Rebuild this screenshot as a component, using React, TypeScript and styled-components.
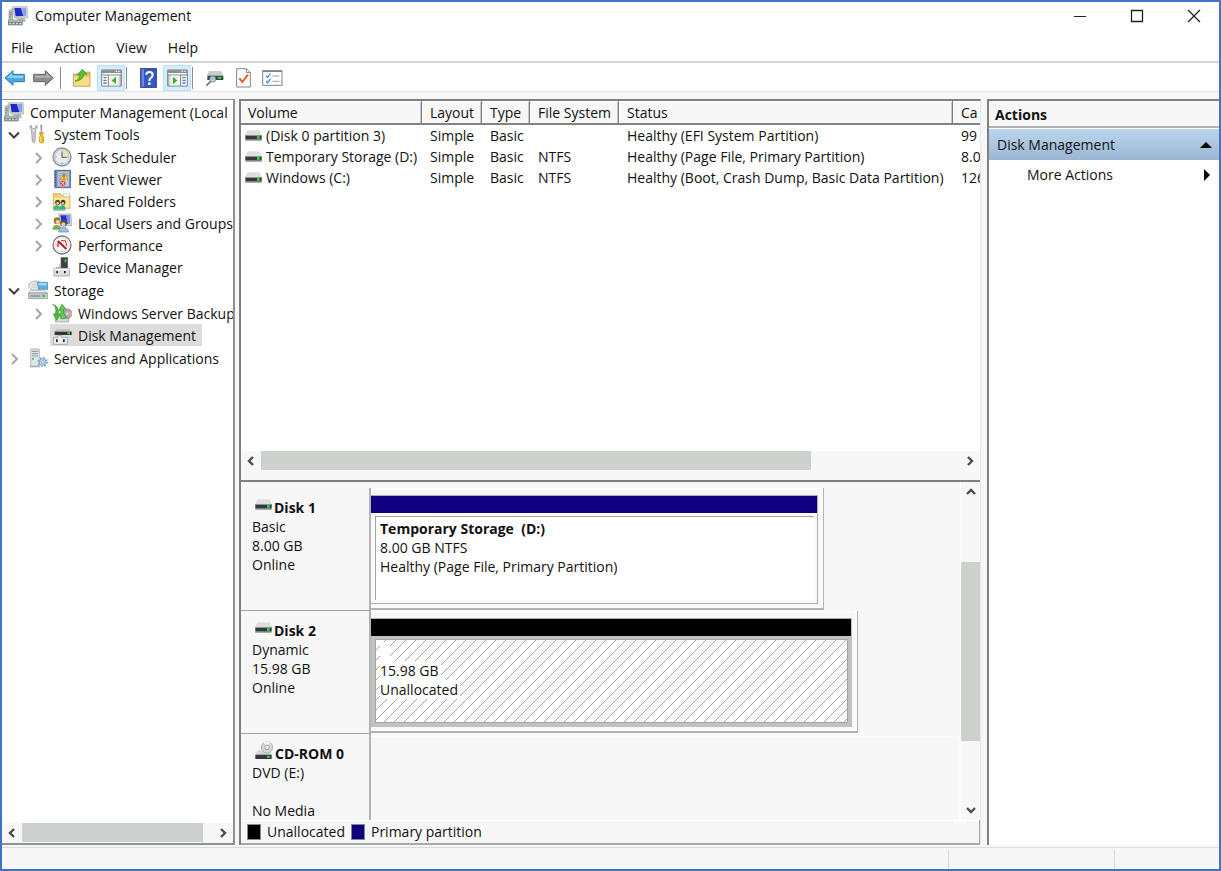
import React from "react";
import styled, { createGlobalStyle, css } from "styled-components";

const GlobalStyle = createGlobalStyle`
  * { box-sizing: border-box; }
  body { margin: 0; background: #fff; }
  body, button { font-family: "Open Sans", "Noto Sans", sans-serif; font-size: 14px; line-height: 19px; color: #111; }
  button { margin: 0; padding: 0; border: 0; background: none; text-align: left; white-space: nowrap; }
  ul { list-style: none; margin: 0; padding: 0; }
  h1, h2, h3, p { margin: 0; font-size: 14px; }
  svg { display: block; flex: none; }
`;

/* ---------- window frame ---------- */

const Window = styled.div`
  display: flex;
  flex-direction: column;
  height: 100vh;
  border: 2px solid #4472c4;
  background: #fff;
  overflow: hidden;
`;

const TitleBar = styled.header`
  display: flex;
  align-items: center;
  height: 27px;
  padding-left: 6px;
  gap: 7px;
`;

const Title = styled.h1`
  flex: 1;
  font-weight: 400;
`;

const CaptionButtons = styled.div`
  display: flex;
`;

const CaptionButton = styled.button`
  display: flex;
  align-items: center;
  justify-content: center;
  width: 57px;
  height: 26px;
  &:last-child { width: 54px; padding-left: 4px; }
`;

const MenuBar = styled.nav`
  display: flex;
  align-items: center;
  gap: 21px;
  height: 34px;
  padding: 4px 9px 0;
  border-bottom: 2px solid #d0d4d4;
`;

const Toolbar = styled.div`
  display: flex;
  align-items: center;
  gap: 1px;
  height: 29px;
  padding-top: 1px;
  border-bottom: 1px solid #e4e4e4;
`;

const ToolButton = styled.button<{ $on?: boolean }>`
  display: flex;
  align-items: center;
  justify-content: center;
  width: 28px;
  height: 26px;
  ${(p) => p.$on && css`background: #d5edff; border: 1px solid #b9e0fb;`}
`;

const ToolSeparator = styled.span`
  width: 7px;
  height: 22px;
  border-left: 1px solid #8c8c8c;
`;

const Body = styled.main`
  display: flex;
  flex: 1;
  min-height: 0;
  padding: 7px 0 2px;
  background: #f7f7f7;
`;

const StatusBar = styled.footer`
  display: flex;
  justify-content: flex-end;
  height: 22px;
  border-top: 1px solid #dcdcdc;
  background: #f7f7f7;
`;

const StatusCell = styled.span<{ $w: number }>`
  width: ${(p) => p.$w}px;
  margin-top: 2px;
  border-left: 1px solid #dadada;
`;

/* ---------- scroll bars ---------- */

const HScroll = styled.div`
  display: flex;
  align-items: center;
  height: 20px;
  background: #f7f7f7;
`;

const VScroll = styled.div`
  display: flex;
  flex-direction: column;
  align-items: center;
  width: 20px;
  background: #f7f7f7;
  border-left: 1px solid #fff;
`;

const ScrollTrack = styled.div<{ $v?: boolean }>`
  display: flex;
  flex-direction: ${(p) => (p.$v ? "column" : "row")};
  align-self: stretch;
  flex: 1;
  ${(p) => !p.$v && css`padding-bottom: 1px;`}
`;

const Space = styled.span<{ $grow: number }>`
  flex: ${(p) => p.$grow} 0 0;
`;

const Thumb = styled.span<{ $grow: number }>`
  flex: ${(p) => p.$grow} 0 0;
  background: #ccd1cd;
`;

const ScrollButton = styled.button`
  display: flex;
  align-items: center;
  justify-content: center;
  width: 20px;
  height: 20px;
`;

/* ---------- console tree ---------- */

const TreePane = styled.section`
  display: flex;
  flex-direction: column;
  width: 233px;
  margin-right: 4px;
  background: #fff;
  border: solid #8e929b;
  border-width: 1px 2px 2px 0;
`;

const TreeRoot = styled.div`
  flex: 1;
  min-height: 0;
  overflow: hidden;
  padding-top: 1px;
`;

const Branch = styled.ul`
  & & { padding: 1px 0; }
`;

const TreeRow = styled.div<{ $depth: number }>`
  display: flex;
  align-items: center;
  height: 22px;
  padding-left: ${(p) => Math.max(0, p.$depth - 1) * 24}px;
`;

const Toggle = styled.button`
  display: flex;
  align-items: center;
  justify-content: center;
  flex: none;
  width: 24px;
  height: 22px;
  padding: 2px 1px 0 0;
`;

const TreeLabel = styled.button<{ $selected?: boolean }>`
  display: flex;
  align-items: center;
  gap: 6px;
  height: 22px;
  padding: 0 6px 0 2px;
  background: ${(p) => (p.$selected ? "#dcdcdc" : "none")};
`;

/* ---------- centre pane ---------- */

const CenterPane = styled.section`
  display: flex;
  flex-direction: column;
  flex: 1;
  min-width: 0;
  margin-right: 6px;
  border: solid #808080;
  border-width: 2px 0 0 2px;
  border-right: 1px solid #e6e6e6;
`;

const VolumePane = styled.div`
  display: flex;
  flex-direction: column;
  height: 381px;
  padding-bottom: 9px;
  border-bottom: 2px solid #808080;
  background: #f7f7f7;
`;

const VolumeView = styled.div`
  flex: 1;
  overflow: hidden;
  background: #fff;
`;

const VolumeTable = styled.table`
  table-layout: fixed;
  width: 100%;
  border-collapse: separate;
  border-spacing: 0;
`;

const HeadCell = styled.th`
  height: 24px;
  padding: 0 0 0 8px;
  font-weight: 400;
  text-align: left;
  white-space: nowrap;
  overflow: hidden;
  background: #f7f7f7;
  border-right: 1px solid #7c7c7c;
  border-bottom: 2px solid #828282;
  box-shadow: inset 1px 1px 0 #fff, inset -1px 0 0 #c8c8c8;
  &:first-child { padding-left: 7px; }
  &:last-child { border-right: 0; box-shadow: inset 1px 1px 0 #fff; }
`;

const Cell = styled.td`
  height: 21px;
  padding: 0 0 0 8px;
  white-space: nowrap;
  overflow: hidden;
`;

const VolumeName = styled.span`
  display: flex;
  align-items: center;
  gap: 4px;
  margin-left: -4px;
`;

const GraphPane = styled.div`
  display: flex;
  flex: 1;
  min-height: 0;
  background: #f7f7f7;
`;

const DiskList = styled.div`
  flex: 1;
  min-width: 0;
  overflow: hidden;
  padding-top: 6px;
`;

const DiskRow = styled.article`
  display: flex;
  height: 123px;
`;

const DiskInfo = styled.div`
  width: 130px;
  padding: 10px 0 0 11px;
  border-right: 2px solid #b4b4b4;
  border-bottom: 1px solid #a0a0a0;
`;

const DiskName = styled.h3`
  display: flex;
  align-items: center;
  gap: 2px;
  height: 19px;
  padding-left: 3px;
  white-space: nowrap;
  svg { margin-top: -7px; }
`;

const BlankTrack = styled.div`
  flex: 1;
  margin-top: 2px;
  border: solid #fff;
  border-width: 1px 1px 0 0;
`;

const Track = styled.div`
  height: 122px;
  padding: 7px 5px 4px 0;
  border: solid #b4b4b4;
  border-width: 0 1px 2px 0;
  box-shadow: inset 0 2px 0 #fcfcfc, inset -2px -2px 0 #fcfcfc;
`;

const Partition = styled.div<{ $selected?: boolean; $w: number }>`
  display: flex;
  flex-direction: column;
  width: ${(p) => p.$w}px;
  height: 109px;
  background: ${(p) => (p.$selected ? "#bfc3c0" : "#f9f9f9")};
  border: solid ${(p) => (p.$selected ? "#bfc3c0" : "#b0b0b0")};
  border-width: 0 1px 1px 0;
`;

const Stripe = styled.div<{ $color: string }>`
  height: 18px;
  background: ${(p) => p.$color};
  border-top: 1px solid #b0b0b0;
`;

const PartitionBox = styled.div<{ $hatched?: boolean }>`
  flex: 1;
  margin: 3px 3px 3px 4px;
  padding: 2px 0 0 4px;
  border: solid #a2a4a2;
  border-width: 1px 0 0 1px;
  background-color: #fff;
  ${(p) =>
    p.$hatched &&
    css`
      border-width: 1px;
      background-image: linear-gradient(135deg, #a4a4a4 0 1%, #fff 5% 45%, #a4a4a4 49% 51%, #fff 55% 95%, #a4a4a4 99%);
      background-size: 10px 10px;
    `}
`;

const PartitionText = styled.p<{ $bold?: boolean }>`
  width: fit-content;
  height: 19px;
  min-width: 10px;
  padding-right: 2px;
  white-space: pre;
  background: #fff;
  font-weight: ${(p) => (p.$bold ? 700 : 400)};
`;

const Legend = styled.div`
  display: flex;
  align-items: center;
  gap: 6px;
  height: 25px;
  padding-left: 6px;
  background: #f7f7f7;
  border: solid #aaa;
  border-width: 0 1px 2px 0;
  box-shadow: inset 0 1px 0 #fff;
`;

const Swatch = styled.span<{ $color: string }>`
  width: 14px;
  height: 16px;
  border: 1px solid #888;
  background: ${(p) => p.$color};
`;

/* ---------- actions pane ---------- */

const ActionsPane = styled.aside`
  width: 232px;
  background: #fff;
  border: solid #808080;
  border-width: 2px 0 0 2px;
`;

const ActionsTitle = styled.h2`
  height: 27px;
  padding: 4px 6px;
  background: #f7f7f7;
  border-bottom: 2px solid #b4b4b4;
  margin-bottom: 1px;
`;

const ActionGroup = styled.button`
  display: flex;
  align-items: center;
  justify-content: space-between;
  width: 100%;
  height: 31px;
  padding: 0 7px 0 8px;
  background: linear-gradient(#bcd5ee, #9bb6d3);
`;

const ActionItem = styled.button`
  display: flex;
  align-items: center;
  justify-content: space-between;
  width: 100%;
  height: 29px;
  padding: 0 8px 0 38px;
`;

/* ---------- icons ---------- */

type IconProps = { w?: number; h?: number; children: React.ReactNode };

/* Icons are drawn on a grid three times finer than their display size. */
const Icon = ({ w = 20, h = 20, children }: IconProps) => (
  <svg width={w} height={h} viewBox={`0 0 ${w * 3} ${h * 3}`} aria-hidden="true">
    {children}
  </svg>
);

const ComputerIcon = () => (
  <Icon>
    <path d="M3 14 14 8V44H3Z" fill="#b9c0c2" stroke="#8f9799" strokeWidth="2" />
    <path d="M5 20h7M5 26h7" stroke="#5f696b" strokeWidth="2" />
    <rect x="4" y="30" width="5" height="5" fill="#3ccf45" />
    <path d="M14 2H57L60 36 20 36Z" fill="#d5d9d2" stroke="#a3a9a5" strokeWidth="2" />
    <path d="M19 6H52L54 30 23 31Z" fill="#1c2bc4" />
    <path d="M38 6H52L54 30 46 31Z" fill="#8ea2f2" />
    <path d="M24 37 50 36 54 47H40Z" fill="#b5bab4" />
    <path d="M0 41H44V58H0Z" fill="#7c8681" />
    <path d="M2 43H42V47H2Z" fill="#c3cac6" />
    <path d="M4 50h6v5H4zM14 50h6v5h-6zM24 50h6v5h-6zM34 50h6v5h-6z" fill="#d5dad7" />
  </Icon>
);

const ToolsIcon = () => (
  <Icon>
    <path d="M9 3C5 6 5 14 11 18L13 53Q17 60 21 53L22 18C29 14 29 6 24 3V11L17 14 10 11Z" fill="#e3e5e6" stroke="#858a8c" strokeWidth="2.5" />
    <path d="M17 20V51" stroke="#b6babb" strokeWidth="3" />
    <path d="M38 3H42L41 26H39Z" fill="#8d9294" stroke="#73787a" />
    <path d="M34 26H46L44 34 47 42V54Q40 61 34 54V42L37 34Z" fill="#f3b622" stroke="#c6870e" strokeWidth="2" />
    <path d="M38 38V54" stroke="#ffe48a" strokeWidth="3" />
  </Icon>
);

const ClockIcon = () => (
  <Icon>
    <circle cx="30" cy="30" r="27" fill="#d7dadb" stroke="#8d9193" strokeWidth="4" />
    <circle cx="30" cy="30" r="21" fill="#e9f0f5" stroke="#b9bfc2" strokeWidth="2" />
    <path d="M30 30V10A20 20 0 0 1 50 30Z" fill="#f8dfa2" />
    <path d="M30 13V31H44" fill="none" stroke="#4c5967" strokeWidth="3" />
    <path d="M30 46v4M10 30h4M46 30h4" stroke="#7b8790" strokeWidth="3" />
  </Icon>
);

const EventIcon = () => (
  <Icon>
    <rect x="9" y="4" width="46" height="52" fill="#7f99c7" stroke="#4e6796" strokeWidth="3" />
    <rect x="17" y="8" width="34" height="44" fill="#b9cbe6" />
    <path d="M19 14H49M19 20H49M19 26H30M19 32H28M19 38H24M19 44H24" stroke="#7790ba" strokeWidth="2" />
    <path d="M6 9h8M6 17h8M6 25h8M6 33h8M6 41h8M6 49h8" stroke="#47536b" strokeWidth="3" />
    <path d="M36 10 48 31H25Z" fill="#ffd53a" stroke="#c99a11" strokeWidth="2" />
    <path d="M36 16V24M36 26V29" stroke="#222" strokeWidth="3" />
    <circle cx="32" cy="43" r="9" fill="#e03b31" stroke="#f6c6c2" strokeWidth="2" />
    <path d="M28 39 36 47M36 39 28 47" stroke="#fff" strokeWidth="3" />
  </Icon>
);

const SharedFolderIcon = () => (
  <Icon>
    <path d="M4 8H26L30 13H54V52H4Z" fill="#f0cf74" stroke="#c89f3f" strokeWidth="2" />
    <path d="M34 8H53V16H34Z" fill="#fff" stroke="#b9bfc2" strokeWidth="2" />
    <path d="M6 20H52V50H6Z" fill="#fbe59f" />
    <path d="M9 36Q9 26 18 26 26 27 25 38L20 42 12 41Z" fill="#5c4a2a" />
    <circle cx="17" cy="37" r="4" fill="#f2c9a0" />
    <path d="M26 36Q26 26 34 26 42 27 40 38L36 42 29 41Z" fill="#38352f" />
    <circle cx="33" cy="37" r="4" fill="#f2c9a0" />
    <path d="M3 55Q5 42 17 43 24 44 25 55Z" fill="#45b98a" />
    <path d="M22 55Q24 42 33 43 40 44 41 55Z" fill="#3fa58e" />
    <path d="M4 57H40" stroke="#2d9a66" strokeWidth="3" />
  </Icon>
);

const UsersIcon = () => (
  <Icon>
    <path d="M20 3H57L59 38 25 39Z" fill="#d3d8db" stroke="#9aa0a5" strokeWidth="2" />
    <path d="M25 7H52L54 33H29Z" fill="#2234c8" />
    <path d="M42 7H52L54 33H47Z" fill="#7f97f0" />
    <circle cx="15" cy="23" r="10" fill="#9a7a34" />
    <circle cx="17" cy="27" r="6" fill="#efd1a4" />
    <path d="M1 50Q2 34 15 36 26 36 28 50Z" fill="#7bb04f" />
    <circle cx="35" cy="30" r="10" fill="#5a4a3c" />
    <circle cx="34" cy="34" r="6" fill="#eccaa6" />
    <path d="M20 57Q21 42 34 43 48 43 50 57Z" fill="#9dc0e4" stroke="#5f86b3" strokeWidth="2" />
  </Icon>
);

const PerformanceIcon = () => (
  <Icon>
    <circle cx="30" cy="30" r="27" fill="#fff" stroke="#77797a" strokeWidth="4" />
    <circle cx="30" cy="30" r="21" fill="#fafafa" stroke="#c4c6c7" strokeWidth="2" />
    <path d="M18 36V20" stroke="#d8262b" strokeWidth="4" />
    <path d="M18 18 43 42" stroke="#c5161d" strokeWidth="6" />
    <path d="M27 17H40Q44 24 43 34" fill="none" stroke="#d8262b" strokeWidth="3" />
    <path d="M30 46v4M12 30h3" stroke="#8c8e8f" strokeWidth="2" />
  </Icon>
);

const DeviceManagerIcon = () => (
  <Icon>
    <rect x="27" y="2" width="20" height="32" fill="#3b4144" stroke="#5d6467" strokeWidth="2" />
    <rect x="38" y="7" width="5" height="9" fill="#4ccf6a" />
    <path d="M12 29H22V22H27V36H12Z" fill="#b9bdbf" />
    <path d="M6 34H52V57H6Z" fill="#dfe1e2" stroke="#8a8e90" strokeWidth="2" />
    <path d="M7 35H51V39H7Z" fill="#fff" />
    <path d="M13 42h5v7h-5zM36 42h5v7h-5z" fill="#222" />
  </Icon>
);

const StorageIcon = () => (
  <Icon>
    <ellipse cx="22" cy="17" rx="20" ry="14" fill="#e4e7e9" stroke="#93999c" strokeWidth="2" />
    <ellipse cx="20" cy="17" rx="6" ry="4" fill="#fff" stroke="#a3a8aa" strokeWidth="2" />
    <path d="M28 7H58L60 28H32Z" fill="#5fb2dc" stroke="#3a86ad" strokeWidth="2" />
    <path d="M31 9H55L56 16H32Z" fill="#a5dbf3" />
    <path d="M6 31H50L58 39H2Z" fill="#eceeef" stroke="#a5aaac" strokeWidth="2" />
    <path d="M2 39H58V56H2Z" fill="#c9cdcf" stroke="#84898b" strokeWidth="2" />
    <rect x="7" y="46" width="30" height="4" fill="#7f8587" />
    <rect x="43" y="44" width="8" height="7" fill="#3ec742" />
  </Icon>
);

const BackupIcon = () => (
  <Icon>
    <path d="M10 32H42L50 42V57H10Z" fill="#d6dadb" stroke="#8d9294" strokeWidth="2" />
    <circle cx="46" cy="32" r="14" fill="#a9abb0" stroke="#77797e" strokeWidth="2" />
    <path d="M46 32 58 24A14 14 0 0 1 56 42Z" fill="#e7a08c" />
    <circle cx="46" cy="32" r="4" fill="#fff" stroke="#777" />
    <path d="M2 4Q10 6 12 22L10 36 4 32 14 52 25 34 18 37Q24 10 2 4Z" fill="#4bbf3b" stroke="#2c8d22" strokeWidth="2" />
    <path d="M26 46V20L20 24 30 4 42 18 35 18V30Q36 40 44 44 34 50 26 46Z" fill="#63d04f" stroke="#2c8d22" strokeWidth="2" />
  </Icon>
);

const DiskManagementIcon = () => (
  <Icon>
    <path d="M14 12H52L58 20H8Z" fill="#bfc2c3" />
    <path d="M8 20H59V30H8Z" fill="#2f3536" />
    <rect x="46" y="22" width="8" height="6" fill="#36d23a" />
    <path d="M5 37H18V31H28V37H47V58H5Z" fill="#eceded" stroke="#8b8f91" strokeWidth="2" />
    <path d="M12 43h5v8h-5zM33 43h5v8h-5z" fill="#222" />
  </Icon>
);

const ServicesIcon = () => (
  <Icon>
    <path d="M8 3H34V54H8Z" fill="#dfe6ea" stroke="#96a1a8" strokeWidth="2" />
    <path d="M12 10H30M12 17H30M12 24H30" stroke="#8194a0" strokeWidth="3" />
    <rect x="12" y="30" width="6" height="5" fill="#49c04e" />
    <path d="M5 54H36V58H5Z" fill="#aab3b8" />
    <circle cx="44" cy="42" r="13" fill="none" stroke="#7ba7cd" strokeWidth="5" strokeDasharray="5 5.2" />
    <circle cx="44" cy="42" r="10" fill="#b9d6ef" stroke="#7ba7cd" strokeWidth="3" />
    <circle cx="44" cy="42" r="4" fill="#fff" stroke="#6d9cc5" strokeWidth="2" />
  </Icon>
);

const DiskIcon = () => (
  <Icon w={17} h={11}>
    <path d="M7 1H44L50 15H1Z" fill="#dcdedf" />
    <path d="M1 15H50V29H1Z" fill="#34393a" />
    <path d="M1 15H50V18H1ZM1 29H50V32H1Z" fill="#8f9494" />
    <rect x="36" y="18" width="8" height="9" fill="#2ad32e" />
  </Icon>
);

const CdIcon = () => (
  <Icon w={18} h={19}>
    <path d="M8 28H44L50 41H1Z" fill="#d6d8d9" />
    <circle cx="36" cy="19" r="17" fill="#d2d6d6" stroke="#9da2a2" strokeWidth="2" />
    <path d="M36 19 25 5A17 17 0 0 1 46 5Z" fill="#f3f5f5" />
    <circle cx="36" cy="19" r="7" fill="#f2f3f3" stroke="#9da2a2" strokeWidth="3" />
    <path d="M1 41H50V54H1Z" fill="#34393a" />
    <rect x="36" y="44" width="8" height="7" fill="#2ad32e" />
  </Icon>
);

const ArrowLeftIcon = () => (
  <Icon w={24}>
    <path d="M3 30 27 8V19H61V41H27V52Z" fill="#4ba9e6" stroke="#2b78b4" strokeWidth="3" strokeLinejoin="round" />
    <path d="M9 29 24 15V23H58V30Z" fill="#93d2f7" />
  </Icon>
);

const ArrowRightIcon = () => (
  <Icon w={24}>
    <path d="M61 30 37 8V19H2V41H37V52Z" fill="#8d8d8d" stroke="#666" strokeWidth="3" strokeLinejoin="round" />
    <path d="M55 29 40 15V23H6V29Z" fill="#b2b2b2" />
  </Icon>
);

const FolderUpIcon = () => (
  <Icon>
    <path d="M4 18H22L27 12H54V55H4Z" fill="#e3bf5b" stroke="#b8923a" strokeWidth="2" />
    <path d="M6 26H52V53H6Z" fill="#f8dc86" />
    <path d="M9 40Q23 34 24 19L15 21 31 4 44 19 35 18Q34 38 9 40Z" fill="#4fc43c" stroke="#2b8d20" strokeWidth="2" />
  </Icon>
);

const PaneIcon = ({ right }: { right?: boolean }) => (
  <Icon w={21} h={18}>
    <path d="M2 3H61V51H2Z" fill="#fff" stroke="#7a7f84" strokeWidth="3" />
    <path d="M2 3H61V12H2Z" fill="#8a9095" />
    <path d="M44 7h4M52 7h4" stroke="#fff" strokeWidth="4" />
    <path d="M3 18H60" stroke="#7a7f84" strokeWidth="3" />
    <g transform={right ? "translate(63 0) scale(-1 1)" : undefined}>
      <path d="M22 18V50M57 18V50" stroke="#7a7f84" strokeWidth="3" />
      <path d="M7 26H17M7 34H17M7 42H17" stroke="#4d7ec2" strokeWidth="4" />
      <path d="M26 20H55V49H26Z" fill="#edf1ec" />
      <path d="M45 24V45L32 34.500Z" fill="#3cae2f" />
    </g>
  </Icon>
);

const HelpIcon = () => (
  <Icon w={17} h={20}>
    <rect x="2" y="2" width="47" height="56" fill="#3757c4" stroke="#253d94" strokeWidth="3" />
    <path d="M5 4H12V56H5Z" fill="#7087dc" />
    <path d="M19 20Q19 12 28 12 38 12 38 21 38 27 32 30 28 33 28 39" fill="none" stroke="#fff" strokeWidth="6" />
    <circle cx="28" cy="47" r="4" fill="#fff" />
  </Icon>
);

const FindDiskIcon = () => (
  <Icon w={19} h={18}>
    <path d="M12 6H48L54 20H6Z" fill="#c8cccd" />
    <path d="M7 20H55V33H7Z" fill="#3d4445" />
    <rect x="38" y="23" width="11" height="7" fill="#2cd034" />
    <circle cx="23" cy="30" r="9" fill="#bfdcec" fillOpacity=".85" stroke="#6f8c9b" strokeWidth="3" />
    <path d="M17 37 4 50" stroke="#6b7c86" strokeWidth="5" />
  </Icon>
);

const CheckDocIcon = () => (
  <Icon w={15} h={20}>
    <path d="M2 2H31L43 14V57H2Z" fill="#fff" stroke="#858585" strokeWidth="3" />
    <path d="M31 2V14H43" fill="none" stroke="#858585" strokeWidth="3" />
    <path d="M10 31 19 42 36 20" fill="none" stroke="#ec5a24" strokeWidth="6" />
  </Icon>
);

const ListIcon = () => (
  <Icon w={21} h={16}>
    <path d="M2 2H60V46H2Z" fill="#fff" stroke="#7f858a" strokeWidth="3" />
    <path d="M2 4H60" stroke="#7f858a" strokeWidth="4" />
    <path d="M12 17 17 22 25 11M12 33 17 38 25 27" fill="none" stroke="#3e90de" strokeWidth="4" />
    <path d="M31 18H52M31 34H52" stroke="#9aa0a5" strokeWidth="3" />
  </Icon>
);

const angles = { right: 0, down: 90, left: 180, up: 270 };

const Chevron = ({ dir }: { dir: keyof typeof angles }) => (
  <svg width="14" height="14" viewBox="0 0 14 14" aria-hidden="true">
    <path d="M5 3 9 7 5 11" fill="none" stroke="#4d4d4d" strokeWidth="2.400" transform={`rotate(${angles[dir]} 7 7)`} />
  </svg>
);

const TreeChevron = ({ open }: { open?: boolean }) => (
  <svg width="14" height="14" viewBox="0 0 14 14" aria-hidden="true">
    <path
      d={open ? "M2 4.500 7 9.500 12 4.500" : "M5 2 10 7 5 12"}
      fill="none"
      stroke={open ? "#404040" : "#a6a6a6"}
      strokeWidth="2"
    />
  </svg>
);

/* ---------- data ---------- */

type Node = { label: string; icon: React.FC; open?: boolean; leaf?: boolean; selected?: boolean; children?: Node[] };

const nodes: Node[] = [
  {
    label: "System Tools",
    icon: ToolsIcon,
    open: true,
    children: [
      { label: "Task Scheduler", icon: ClockIcon },
      { label: "Event Viewer", icon: EventIcon },
      { label: "Shared Folders", icon: SharedFolderIcon },
      { label: "Local Users and Groups", icon: UsersIcon },
      { label: "Performance", icon: PerformanceIcon },
      { label: "Device Manager", icon: DeviceManagerIcon, leaf: true },
    ],
  },
  {
    label: "Storage",
    icon: StorageIcon,
    open: true,
    children: [
      { label: "Windows Server Backup", icon: BackupIcon },
      { label: "Disk Management", icon: DiskManagementIcon, leaf: true, selected: true },
    ],
  },
  { label: "Services and Applications", icon: ServicesIcon },
];

const volumes = [
  ["(Disk 0 partition 3)", "Simple", "Basic", "", "Healthy (EFI System Partition)", "99"],
  ["Temporary Storage (D:)", "Simple", "Basic", "NTFS", "Healthy (Page File, Primary Partition)", "8.0"],
  ["Windows (C:)", "Simple", "Basic", "NTFS", "Healthy (Boot, Crash Dump, Basic Data Partition)", "126"],
];

const columns: [string, string][] = [
  ["Volume", "181px"],
  ["Layout", "60px"],
  ["Type", "48px"],
  ["File System", "89px"],
  ["Status", "334px"],
  ["Ca", "auto"],
];

const TreeNode = ({ node, depth }: { node: Node; depth: number }) => (
  <li>
    <TreeRow $depth={depth}>
      {node.leaf ? (
        <Toggle as="span" />
      ) : (
        <Toggle aria-label={`Toggle ${node.label}`} aria-expanded={!!node.open}>
          <TreeChevron open={node.open} />
        </Toggle>
      )}
      <TreeLabel $selected={node.selected}>
        <node.icon />
        {node.label}
      </TreeLabel>
    </TreeRow>
    {node.children && (
      <Branch>
        {node.children.map((child) => (
          <TreeNode key={child.label} node={child} depth={depth + 1} />
        ))}
      </Branch>
    )}
  </li>
);

export default function App() {
  return (
    <Window>
      <GlobalStyle />
      <TitleBar>
        <ComputerIcon />
        <Title>Computer Management</Title>
        <CaptionButtons>
          <CaptionButton aria-label="Minimize">
            <svg width="14" height="14" viewBox="0 0 14 14"><path d="M1 7.500H13" stroke="#222" /></svg>
          </CaptionButton>
          <CaptionButton aria-label="Maximize">
            <svg width="14" height="14" viewBox="0 0 14 14"><path d="M1.500 1.500H12.500V12.500H1.500Z" fill="none" stroke="#222" strokeWidth="1.300" /></svg>
          </CaptionButton>
          <CaptionButton aria-label="Close">
            <svg width="14" height="14" viewBox="0 0 14 14"><path d="M1 1 13 13M13 1 1 13" stroke="#222" strokeWidth="1.300" /></svg>
          </CaptionButton>
        </CaptionButtons>
      </TitleBar>

      <MenuBar>
        {["File", "Action", "View", "Help"].map((m) => (
          <button key={m}>{m}</button>
        ))}
      </MenuBar>

      <Toolbar role="toolbar">
        <ToolButton aria-label="Back"><ArrowLeftIcon /></ToolButton>
        <ToolButton aria-label="Forward"><ArrowRightIcon /></ToolButton>
        <ToolSeparator />
        <ToolButton aria-label="Up one level"><FolderUpIcon /></ToolButton>
        <ToolButton $on aria-label="Console tree"><PaneIcon /></ToolButton>
        <ToolSeparator />
        <ToolButton aria-label="Help"><HelpIcon /></ToolButton>
        <ToolButton $on aria-label="Action pane"><PaneIcon right /></ToolButton>
        <ToolSeparator />
        <ToolButton aria-label="Rescan disks"><FindDiskIcon /></ToolButton>
        <ToolButton aria-label="Properties"><CheckDocIcon /></ToolButton>
        <ToolButton aria-label="Settings"><ListIcon /></ToolButton>
      </Toolbar>

      <Body>
        <TreePane>
          <TreeRoot>
            <TreeRow $depth={0}>
              <TreeLabel>
                <ComputerIcon />
                Computer Management (Local
              </TreeLabel>
            </TreeRow>
            <Branch>
              {nodes.map((n) => (
                <TreeNode key={n.label} node={n} depth={1} />
              ))}
            </Branch>
          </TreeRoot>
          <HScroll>
            <ScrollButton aria-label="Scroll left"><Chevron dir="left" /></ScrollButton>
            <ScrollTrack>
              <Thumb $grow={181} />
              <Space $grow={10} />
            </ScrollTrack>
            <ScrollButton aria-label="Scroll right"><Chevron dir="right" /></ScrollButton>
          </HScroll>
        </TreePane>

        <CenterPane>
          <VolumePane>
            <VolumeView>
              <VolumeTable>
                <colgroup>
                  {columns.map(([name, w]) => (
                    <col key={name} style={{ width: w }} />
                  ))}
                </colgroup>
                <thead>
                  <tr>
                    {columns.map(([name]) => (
                      <HeadCell key={name} scope="col">{name}</HeadCell>
                    ))}
                  </tr>
                </thead>
                <tbody>
                  {volumes.map((v) => (
                    <tr key={v[0]}>
                      {v.map((text, i) => (
                        <Cell key={i}>
                          {i === 0 ? (
                            <VolumeName>
                              <DiskIcon />
                              {text}
                            </VolumeName>
                          ) : (
                            text
                          )}
                        </Cell>
                      ))}
                    </tr>
                  ))}
                </tbody>
              </VolumeTable>
            </VolumeView>
            <HScroll>
              <ScrollButton aria-label="Scroll left"><Chevron dir="left" /></ScrollButton>
              <ScrollTrack>
                <Thumb $grow={549} />
                <Space $grow={149} />
              </ScrollTrack>
              <ScrollButton aria-label="Scroll right"><Chevron dir="right" /></ScrollButton>
            </HScroll>
          </VolumePane>

          <GraphPane>
            <DiskList>
              <DiskRow>
                <DiskInfo>
                  <DiskName><DiskIcon />Disk 1</DiskName>
                  <p>Basic</p>
                  <p>8.00 GB</p>
                  <p>Online</p>
                </DiskInfo>
                <Track>
                  <Partition $w={447}>
                    <Stripe $color="#10007f" />
                    <PartitionBox>
                      <PartitionText $bold>{"Temporary Storage  (D:)"}</PartitionText>
                      <PartitionText>8.00 GB NTFS</PartitionText>
                      <PartitionText>Healthy (Page File, Primary Partition)</PartitionText>
                    </PartitionBox>
                  </Partition>
                </Track>
              </DiskRow>
              <DiskRow>
                <DiskInfo>
                  <DiskName><DiskIcon />Disk 2</DiskName>
                  <p>Dynamic</p>
                  <p>15.98 GB</p>
                  <p>Online</p>
                </DiskInfo>
                <Track>
                  <Partition $selected $w={481}>
                    <Stripe $color="#000" />
                    <PartitionBox $hatched>
                      <PartitionText />
                      <PartitionText>15.98 GB</PartitionText>
                      <PartitionText>Unallocated</PartitionText>
                    </PartitionBox>
                  </Partition>
                </Track>
              </DiskRow>
              <DiskRow>
                <DiskInfo>
                  <DiskName><CdIcon />CD-ROM 0</DiskName>
                  <p>DVD (E:)</p>
                  <br />
                  <p>No Media</p>
                </DiskInfo>
                <BlankTrack />
              </DiskRow>
            </DiskList>
            <VScroll>
              <ScrollButton aria-label="Scroll up"><Chevron dir="up" /></ScrollButton>
              <ScrollTrack $v>
                <Space $grow={60} />
                <Thumb $grow={177} />
                <Space $grow={59} />
              </ScrollTrack>
              <ScrollButton aria-label="Scroll down"><Chevron dir="down" /></ScrollButton>
            </VScroll>
          </GraphPane>

          <Legend>
            <Swatch $color="#000" />
            Unallocated
            <Swatch $color="#10007f" />
            Primary partition
          </Legend>
        </CenterPane>

        <ActionsPane>
          <ActionsTitle>Actions</ActionsTitle>
          <ActionGroup>
            Disk Management
            <svg width="12" height="12" viewBox="0 0 12 12" aria-hidden="true"><path d="M0 9 6 3 12 9Z" fill="#000" /></svg>
          </ActionGroup>
          <ActionItem>
            More Actions
            <svg width="8" height="12" viewBox="0 0 8 12" aria-hidden="true"><path d="M1 0 7 6 1 12Z" fill="#000" /></svg>
          </ActionItem>
        </ActionsPane>
      </Body>

      <StatusBar>
        <StatusCell $w={166} />
        <StatusCell $w={105} />
      </StatusBar>
    </Window>
  );
}
